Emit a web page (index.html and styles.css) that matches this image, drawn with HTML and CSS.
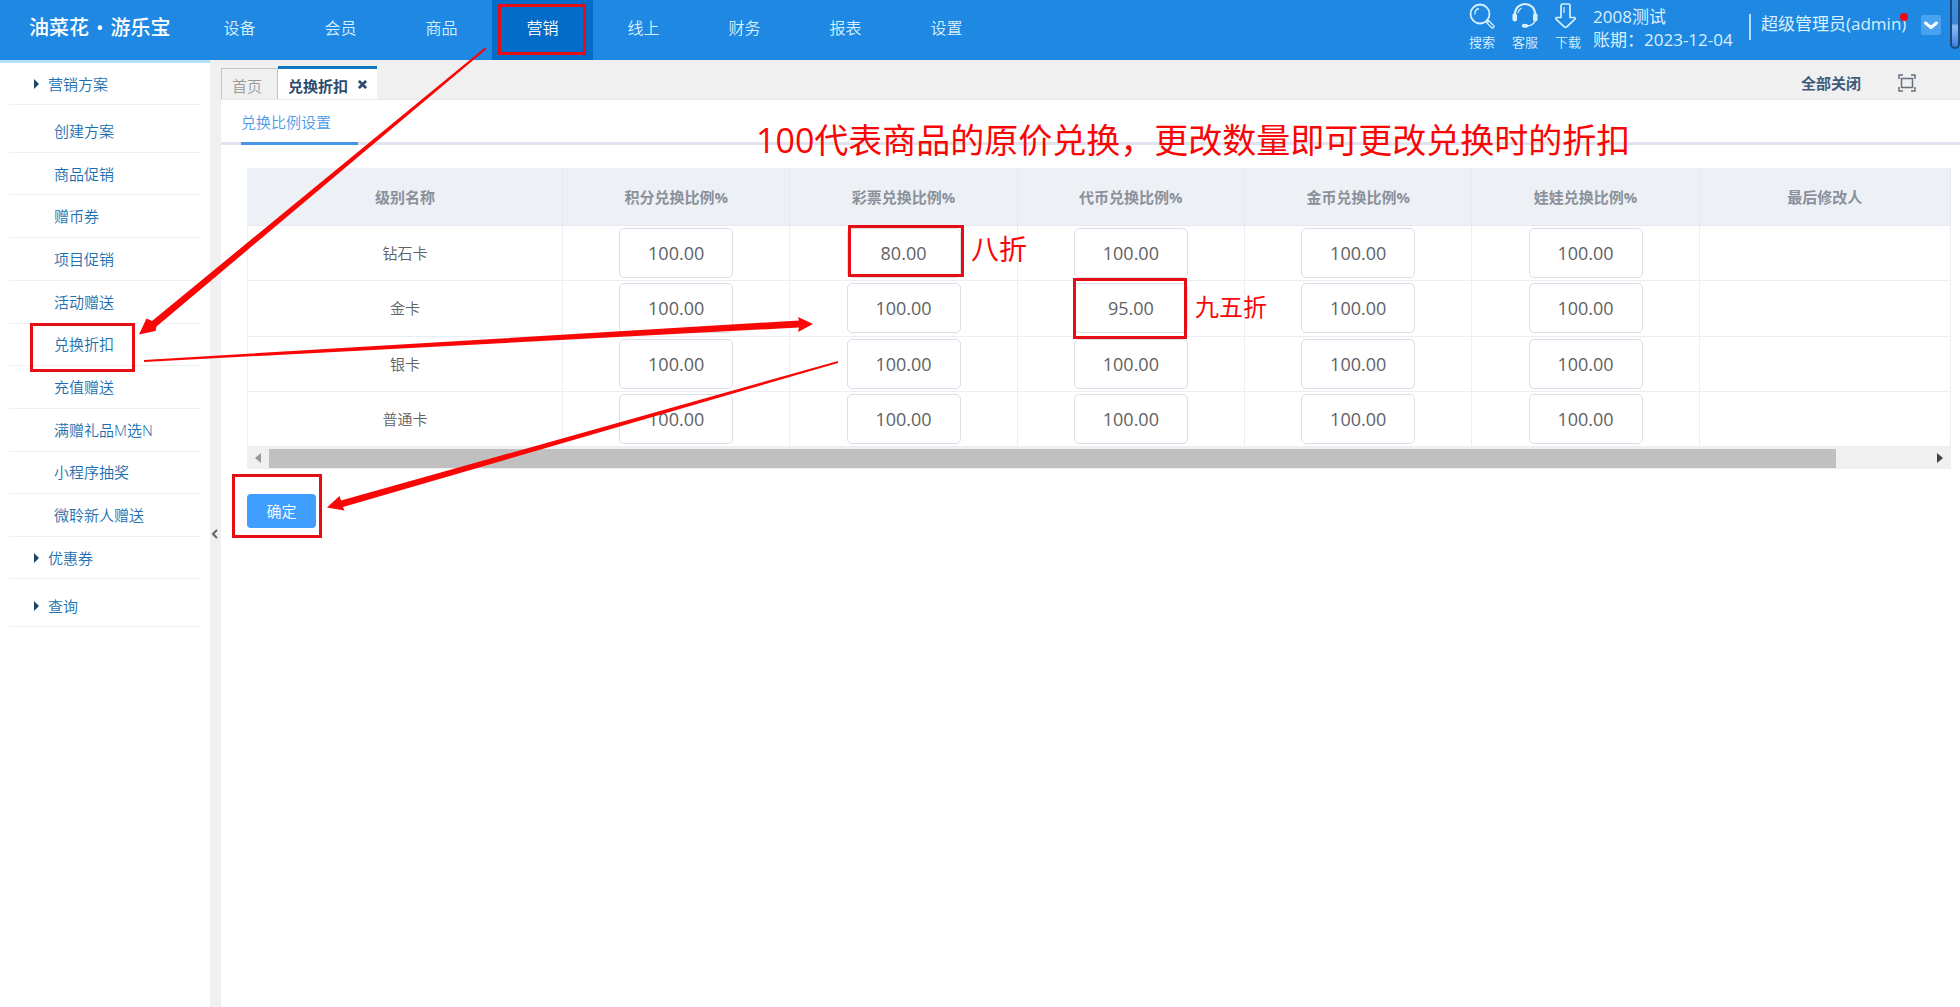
FILE: index.html
```html
<!DOCTYPE html>
<html lang="zh-CN">
<head>
<meta charset="utf-8">
<title>兑换折扣</title>
<link rel="stylesheet" href="styles.css">
</head>
<body>
<header class="topbar">
  <a class="logo" href="#"><span>油菜花</span><span>•</span><span>游乐宝</span></a>
  <nav class="main-nav">
    <a href="#">设备</a>
    <a href="#">会员</a>
    <a href="#">商品</a>
    <a href="#" class="active">营销</a>
    <a href="#">线上</a>
    <a href="#">财务</a>
    <a href="#">报表</a>
    <a href="#">设置</a>
  </nav>
  <div class="tools">
    <a href="#" class="tool">
      <svg viewBox="0 0 26 26" fill="none" stroke="currentColor"><circle cx="11" cy="11" r="9.500" stroke-width="1.800"/><path d="M6 11.500a5.500 5.500 0 0 1 4-6M18 17.500l2 1.500M19.500 17.500l5 5a1.300 1.300 0 0 1-2 2l-5-5z" stroke-width="1.300"/></svg>
      <span>搜索</span>
    </a>
    <a href="#" class="tool">
      <svg viewBox="0 0 26 26" fill="none" stroke="currentColor"><path d="M3 10.500a10 9.500 0 0 1 20 0" stroke-width="2"/><path d="M6 10a7 7 0 0 1 3.500-5" stroke-width="1.200"/><path d="M23 18c-1.500 3-4 5-8 5" stroke-width="1.600"/><rect x="0.500" y="10" width="4.500" height="8.500" rx="2.200" fill="currentColor" stroke="none"/><rect x="21" y="10" width="4.500" height="8.500" rx="2.200" fill="currentColor" stroke="none"/><ellipse cx="13" cy="22.800" rx="3.200" ry="2" fill="currentColor" stroke="none"/></svg>
      <span>客服</span>
    </a>
    <a href="#" class="tool">
      <svg viewBox="0 0 26 26" fill="none" stroke="currentColor" stroke-width="1.700" stroke-linejoin="round"><path d="M6 2.500a1.500 1.500 0 0 1 1.500-1.500h6a1.500 1.500 0 0 1 1.500 1.500V14.500h4c1.300 0 1.500 1 .7 1.800l-8 7.500c-.8.700-1.600.7-2.400 0l-8-7.500c-.8-.8-.6-1.800.7-1.800H6z"/><path d="M9 4v6" stroke-width="1.200"/></svg>
      <span>下载</span>
    </a>
  </div>
  <div class="shop">
    <div>2008测试</div>
    <div>账期：2023-12-04</div>
  </div>
  <div class="user">
    <span class="user-name">超级管理员(admin)<i class="dot"></i></span>
    <button class="user-menu" type="button" aria-label="菜单"><svg viewBox="0 0 20 20" fill="none" stroke="#fff" stroke-width="3" stroke-linecap="round" stroke-linejoin="round"><path d="M4.500 8l5.500 4.500L15.500 8"/></svg></button>
  </div>
  <div class="page-scroll"></div>
</header>

<div class="body">
  <aside class="sidebar">
    <a class="group" href="#">营销方案</a>
    <div class="subs">
      <a href="#">创建方案</a>
      <a href="#">商品促销</a>
      <a href="#">赠币券</a>
      <a href="#">项目促销</a>
      <a href="#">活动赠送</a>
      <a href="#">兑换折扣</a>
      <a href="#">充值赠送</a>
      <a href="#">满赠礼品M选N</a>
      <a href="#">小程序抽奖</a>
      <a href="#">微聆新人赠送</a>
    </div>
    <a class="group" href="#">优惠券</a>
    <a class="group spaced" href="#">查询</a>
  </aside>
  <button class="splitter" type="button" aria-label="收起"><svg viewBox="0 0 8 10" fill="none" stroke="#666" stroke-width="2"><path d="M6 1L2 5l4 4"/></svg></button>
  <main class="main">
    <div class="tabs">
      <a class="tab" href="#">首页</a>
      <a class="tab current" href="#">兑换折扣<svg viewBox="0 0 10 10" stroke="currentColor" stroke-width="3"><path d="M1 1l8 8M9 1L1 9"/></svg></a>
      <div class="tab-actions">
        <a href="#">全部关闭</a>
        <button type="button" aria-label="全屏"><svg viewBox="0 0 18 18" fill="none" stroke="#66717d" stroke-width="1.500"><path d="M1 5V1h4M13 1h4v4M17 13v4h-4M5 17H1v-4"/><rect x="3.500" y="4.500" width="11" height="9"/></svg></button>
      </div>
    </div>
    <div class="subtabs"><a href="#">兑换比例设置</a></div>
    <form class="panel">
      <table class="rates">
        <colgroup><col class="c-name"><col class="c-rate"><col class="c-rate"><col class="c-rate"><col class="c-rate"><col class="c-rate"><col></colgroup>
        <thead>
          <tr><th>级别名称</th><th>积分兑换比例%</th><th>彩票兑换比例%</th><th>代币兑换比例%</th><th>金币兑换比例%</th><th>娃娃兑换比例%</th><th>最后修改人</th></tr>
        </thead>
        <tbody>
          <tr><td>钻石卡</td><td><input aria-label="钻石卡 积分" value="100.00"></td><td><input aria-label="钻石卡 彩票" value="80.00"></td><td><input aria-label="钻石卡 代币" value="100.00"></td><td><input aria-label="钻石卡 金币" value="100.00"></td><td><input aria-label="钻石卡 娃娃" value="100.00"></td><td></td></tr>
          <tr><td>金卡</td><td><input aria-label="金卡 积分" value="100.00"></td><td><input aria-label="金卡 彩票" value="100.00"></td><td><input aria-label="金卡 代币" value="95.00"></td><td><input aria-label="金卡 金币" value="100.00"></td><td><input aria-label="金卡 娃娃" value="100.00"></td><td></td></tr>
          <tr><td>银卡</td><td><input aria-label="银卡 积分" value="100.00"></td><td><input aria-label="银卡 彩票" value="100.00"></td><td><input aria-label="银卡 代币" value="100.00"></td><td><input aria-label="银卡 金币" value="100.00"></td><td><input aria-label="银卡 娃娃" value="100.00"></td><td></td></tr>
          <tr><td>普通卡</td><td><input aria-label="普通卡 积分" value="100.00"></td><td><input aria-label="普通卡 彩票" value="100.00"></td><td><input aria-label="普通卡 代币" value="100.00"></td><td><input aria-label="普通卡 金币" value="100.00"></td><td><input aria-label="普通卡 娃娃" value="100.00"></td><td></td></tr>
        </tbody>
      </table>
      <div class="hscroll">
        <span class="arrow left"></span>
        <div class="track"><div class="thumb"></div></div>
        <span class="arrow right"></span>
      </div>
      <button class="submit" type="button">确定</button>
    </form>
  </main>
</div>

<!-- tutorial notes drawn over the page -->
<div class="notes">
  <svg class="marks" width="1960" height="1007">
    <g fill="none" stroke="#e60d14" stroke-width="3">
      <rect x="499.500" y="5.500" width="85" height="48"/>
      <rect x="31.500" y="324.500" width="102" height="46"/>
      <rect x="849.500" y="226.500" width="113" height="49"/>
      <rect x="1074.500" y="279.500" width="111" height="58"/>
      <rect x="233.500" y="475.500" width="87" height="61"/>
    </g>
    <g fill="#f90606">
      <path d="M485 47.500L486.500 49L156.500 326.500L155.500 331L139 334.500L146.500 318.500L152 321z"/>
      <path d="M144 360L799 320.500L798 317L813 324L798 332L799 327.500L144 362z"/>
      <path d="M838 361L838 363L343 507L344.500 510.500L327 507.500L339.500 496L341 500.500z"/>
    </g>
  </svg>
  <p class="note note-title">100代表商品的原价兑换，更改数量即可更改兑换时的折扣</p>
  <p class="note note-eight">八折</p>
  <p class="note note-nine">九五折</p>
</div>
</body>
</html>
```
FILE: styles.css
```css
* {
  box-sizing: border-box;
}

html,
body {
  height: 100%;
}

body {
  margin: 0;
  display: flex;
  flex-direction: column;
  position: relative;
  overflow: hidden;
  background: #fff;
  color: #606266;
  font: 350 15px/20px "Open Sans", "Noto Sans CJK SC", sans-serif;
}

a {
  color: inherit;
  text-decoration: none;
}

button,
input {
  font: inherit;
  color: inherit;
}

button {
  padding: 0;
  border: 0;
  background: none;
  cursor: pointer;
}

svg {
  display: block;
}

/* top bar */
.topbar {
  flex: none;
  display: flex;
  height: 60px;
  background: #1e88e2;
  color: #d9f0ff;
}

.logo {
  display: flex;
  gap: 7px;
  width: 189px;
  padding: 14px 0 0 29px;
  color: #fff;
  font-size: 20px;
  line-height: 28px;
  font-weight: 500;
  white-space: nowrap;
}

.main-nav {
  display: flex;
}

.main-nav a {
  width: 101px;
  padding-top: 16px;
  line-height: 24px;
  font-size: 16px;
  text-align: center;
}

.main-nav .active {
  background: #046bc8;
  color: #fff;
}

.tools {
  display: flex;
  gap: 16px;
  margin-left: auto;
  padding-top: 3px;
}

.tool {
  width: 27px;
  font-size: 13px;
  white-space: nowrap;
}

.tool svg {
  width: 26px;
  height: 26px;
}

.tool span {
  display: block;
  margin-top: 3px;
}

.shop {
  width: 156px;
  margin-left: 11px;
  padding-top: 5px;
  font-size: 17px;
  line-height: 23px;
  font-weight: 400;
  white-space: nowrap;
}

.user {
  display: flex;
  align-items: center;
  justify-content: space-between;
  width: 192px;
  height: 26px;
  margin: 14px 9px 0 0;
  padding-left: 10px;
  border-left: 2px solid #b5dcfa;
  font-size: 17px;
  font-weight: 400;
}

.user-name {
  position: relative;
  margin-top: -6px;
}

.dot {
  position: absolute;
  top: -1px;
  right: -2px;
  width: 8px;
  height: 8px;
  border-radius: 50%;
  background: #f7050f;
}

.user-menu {
  width: 20px;
  height: 20px;
  margin-top: -4px;
  border-radius: 2px;
  background: #48a2ef;
}

.page-scroll {
  width: 10px;
  height: 49px;
  border: 2px solid #1c4a7c;
  border-top: 0;
  border-radius: 0 0 5px 5px;
  background: linear-gradient(#3f8fd8, #3b87d4 50%, #8dbbf5 55%, #3c7fe0);
}

/* layout */
.body {
  flex: 1;
  display: flex;
}

.sidebar {
  flex: none;
  width: 210px;
  padding: 0 10px 0 9px;
  border-top: 3px solid #b3e0fb;
  color: #1c6fb0;
}

.sidebar a {
  display: flex;
  align-items: center;
  border-bottom: 1px solid #f0f0f0;
}

.group {
  height: 42px;
  padding-left: 25px;
}

.group::before {
  content: "";
  margin-right: 9px;
  border: solid transparent;
  border-width: 5px 0 5px 5px;
  border-left-color: #1c4566;
}

.subs {
  display: grid;
  grid-auto-rows: 1fr;
  height: 432px;
  padding-top: 5px;
}

.subs a {
  padding-left: 45px;
}

.group.spaced {
  height: 48px;
  padding-top: 6px;
}

.splitter {
  flex: none;
  width: 11px;
  padding: 0 1px;
  background: #f0f0f0;
}

.splitter svg {
  width: 8px;
  height: 10px;
}

.main {
  flex: 1;
  min-width: 0;
}

/* page tabs */
.tabs {
  display: flex;
  align-items: flex-end;
  height: 40px;
  padding-top: 6px;
  background: #f0f0f0;
  border-bottom: 1px solid #e8e8e8;
}

.tab {
  height: 31px;
  padding: 7px 15px 0 10px;
  border: 1px solid #c4c4c4;
  border-bottom: 0;
  color: #999;
}

.tab.current {
  display: flex;
  gap: 10px;
  height: 33px;
  padding: 7px 10px 0 10px;
  border: 0;
  border-top: 3px solid #0f77be;
  background: #fff;
  color: #2b4b6f;
  font-weight: 700;
}

.tab svg {
  width: 9px;
  height: 9px;
  margin-top: 4px;
}

.tab-actions {
  display: flex;
  align-items: center;
  gap: 37px;
  margin: 0 44px 6px auto;
  color: #3f5b7b;
  font-weight: 700;
}

.tab-actions svg {
  width: 18px;
  height: 18px;
}

.subtabs {
  display: flex;
  height: 45px;
  padding-left: 20px;
  box-shadow: inset 0 -3px #e0e4ee;
  color: #4a9bea;
}

.subtabs a {
  width: 117px;
  padding-top: 12px;
  border-bottom: 3px solid #4795e6;
}

/* rates table */
.panel {
  margin: 0;
  padding: 23px 9px 0 26px;
}

.rates {
  width: 100%;
  height: 279px;
  table-layout: fixed;
  border-collapse: separate;
  border-spacing: 0;
  border-left: 1px solid #ebeef5;
}

.c-name {
  width: 315px;
}

.c-rate {
  width: 13.35%;
}

.rates th,
.rates td {
  padding: 0;
  border: solid #ebeef5;
  border-width: 0 1px 1px 0;
  text-align: center;
}

.rates th {
  height: 58px;
  background: #edf0f5;
  border-color: #e6eaf1;
  color: #8b909b;
  font-weight: 700;
}

.rates input {
  display: block;
  width: 114px;
  height: 50px;
  margin: 0 auto;
  padding: 0;
  border: 1px solid #dcdfe6;
  border-radius: 5px;
  background: #fff;
  text-align: center;
  font-size: 18px;
  font-weight: 400;
}

.hscroll {
  display: flex;
  align-items: center;
  height: 22px;
  background: #f0f0f0;
}

.arrow {
  width: 22px;
  display: flex;
  justify-content: center;
}

.arrow::before {
  content: "";
  border: solid transparent;
  border-width: 5px 0 5px 6px;
  border-left-color: #444;
}

.arrow.left::before {
  border-width: 5px 6px 5px 0;
  border-right-color: #999;
}

.track {
  flex: 1;
}

.thumb {
  width: 94.4%;
  height: 19px;
  background: #c0c0c0;
}

.submit {
  display: block;
  width: 69px;
  height: 34px;
  margin-top: 25px;
  border-radius: 4px;
  background: #409eff;
  color: #fff;
}

/* notes */
.notes {
  position: absolute;
  inset: 0;
  pointer-events: none;
}

.marks {
  position: absolute;
  top: 0;
  left: 0;
}

.note {
  position: absolute;
  margin: 0;
  color: #f90606;
  font-weight: 400;
  white-space: nowrap;
}

.note-title {
  top: 120px;
  left: 756px;
  font-size: 34px;
  line-height: 40px;
}

.note-eight {
  top: 233px;
  left: 971px;
  font-size: 28px;
  line-height: 32px;
}

.note-nine {
  top: 291px;
  left: 1195px;
  font-size: 24px;
  line-height: 32px;
}
```
